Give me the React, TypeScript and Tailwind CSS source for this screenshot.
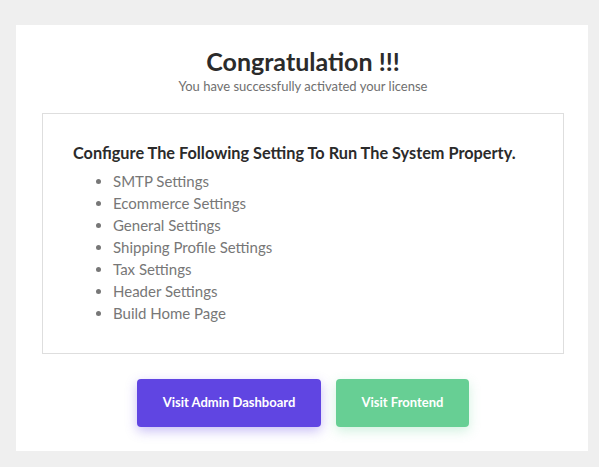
const steps = [
  "SMTP Settings",
  "Ecommerce Settings",
  "General Settings",
  "Shipping Profile Settings",
  "Tax Settings",
  "Header Settings",
  "Build Home Page",
];

export default function App() {
  return (
    <div className="min-h-[467px] bg-[#efefef] pl-4 pr-[11px] pt-[25px] font-['Lato',sans-serif]">
      <div className="flex h-[426px] flex-col items-center bg-white pl-[26px] pr-[24px] pt-[21px]">
        <h1 className="text-[25px] font-bold leading-[30px] text-[#2b2b2b]">
          Congratulation !!!
        </h1>
        <p className="text-[13px] leading-[20px] text-[#6f6f6f]">
          You have successfully activated your license
        </p>

        <div className="mt-[17px] h-[241px] w-full border border-[#dedede] px-[30px] pt-[28px]">
          <h2 className="text-[16.3px] font-bold leading-[22px] text-[#2b2b2b]">
            Configure The Following Setting To Run The System Property.
          </h2>
          <ul className="mt-[6px] list-disc pl-[40px] text-[15px] leading-[22px] text-[#777777] marker:text-[#777777]">
            {steps.map((step) => (
              <li key={step}>{step}</li>
            ))}
          </ul>
        </div>

        <div className="mt-[25px] flex gap-[15px]">
          <button
            type="button"
            className="h-[48px] w-[184px] rounded-[4px] bg-[#6045e2] text-[13px] font-bold text-white shadow-[0_4px_12px_rgba(96,69,226,0.35)]"
          >
            Visit Admin Dashboard
          </button>
          <button
            type="button"
            className="h-[48px] w-[133px] rounded-[4px] bg-[#67cf94] text-[13px] font-bold text-white shadow-[0_4px_12px_rgba(103,207,148,0.3)]"
          >
            Visit Frontend
          </button>
        </div>
      </div>
    </div>
  );
}
